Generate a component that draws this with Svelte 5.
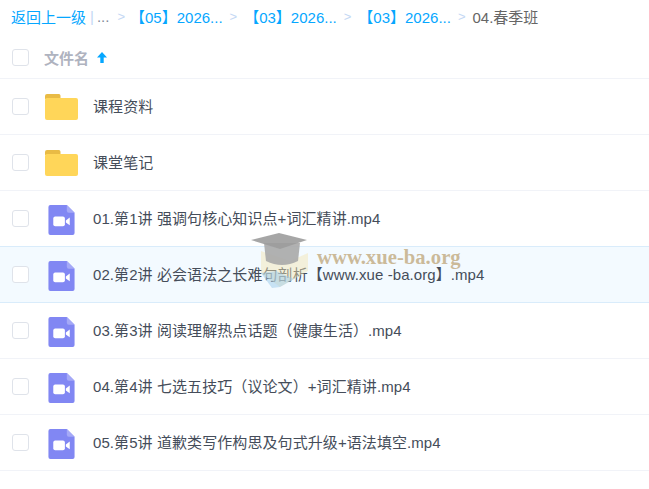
<script>
  const crumbs = ['【05】2026...', '【03】2026...', '【03】2026...'];
  const rows = [
    { name: '课程资料', type: 'folder' },
    { name: '课堂笔记', type: 'folder' },
    { name: '01.第1讲 强调句核心知识点+词汇精讲.mp4', type: 'video' },
    { name: '02.第2讲 必会语法之长难句剖析【www.xue -ba.org】.mp4', type: 'video', active: true },
    { name: '03.第3讲 阅读理解热点话题（健康生活）.mp4', type: 'video' },
    { name: '04.第4讲 七选五技巧（议论文）+词汇精讲.mp4', type: 'video' },
    { name: '05.第5讲 道歉类写作构思及句式升级+语法填空.mp4', type: 'video' }
  ];
</script>

<div class="page">
  <nav class="crumbs">
    <span class="link">返回上一级</span>
    <span class="bar">|</span>
    <span class="dots">...</span>
    {#each crumbs as c, i}
      <span class="sep" class:first={i === 0}>&gt;</span>
      <span class="link">{c}</span>
    {/each}
    <span class="sep last">&gt;</span>
    <span class="current">04.春季班</span>
  </nav>

  <div class="head">
    <span class="check"></span>
    <span class="title">文件名</span>
    <svg class="arrow" width="10" height="11" viewBox="0 0 10 11"><path d="M5 0 L10 5.5 H6.7 V11 H3.3 V5.5 H0 Z" fill="#06a7ff"/></svg>
  </div>

  {#each rows as r}
    <div class="row" class:active={r.active}>
      <span class="check"></span>
      <span class="icon">
        {#if r.type === 'folder'}
          <svg width="33" height="26" viewBox="0 0 33 26">
            <path d="M0 5 V2 A2 2 0 0 1 2 0 H13 A2 2 0 0 1 15.5 2 V5 Z" fill="#e9bb45"/>
            <rect x="0" y="4" width="33" height="22" rx="2" fill="#ffd659"/>
          </svg>
        {:else}
          <svg class="video" width="27" height="30" viewBox="0 0 27 31">
            <path d="M2 0 H19 L27 8 V29 A2 2 0 0 1 25 31 H2 A2 2 0 0 1 0 29 V2 A2 2 0 0 1 2 0 Z" fill="#8187f3"/>
            <path d="M19 0 L27 8 H21 A2 2 0 0 1 19 6 Z" fill="#a5a9f7"/>
            <rect x="5" y="12" width="12" height="10" rx="2" fill="#fff"/>
            <path d="M18 16 L22 13 V21 L18 18 Z" fill="#fff"/>
          </svg>
        {/if}
      </span>
      <span class="name">{r.name}</span>
    </div>
  {/each}

  <div class="mark">
    <svg width="62" height="66" viewBox="0 0 62 66">
      <path d="M11 20 L40 30 L58 22 V40 L30 56 L11 42 Z" fill="#f5e4b0" opacity="0.45"/>
      <path d="M11 42 L22 57 L30 56 L44 48 L26 40 Z" fill="#9cc9ea" opacity="0.5"/>
      <path d="M14 12 H50 L48 30 Q32 38 16 30 Z" fill="#a9a9a9" opacity="0.9"/>
      <path d="M1 9 L29 2 L57 9 L30 18 Z" fill="#9c9c9c" opacity="0.9"/>
    </svg>
    <span class="site">www.xue-ba.org</span>
  </div>
</div>

<style>
  :global(body) {
    margin: 0;
    background: #fff;
  }
  .page {
    position: relative;
    width: 649px;
    height: 489px;
    overflow: hidden;
    font-family: "Liberation Sans", "Noto Sans CJK SC", sans-serif;
    font-size: 15px;
    color: #454d5a;
  }
  .crumbs {
    height: 36px;
    box-sizing: border-box;
    padding: 0 0 3px 11px;
    display: flex;
    align-items: center;
    white-space: nowrap;
  }
  .link {
    color: #06a7ff;
  }
  .bar {
    color: #c4d8f4;
    margin-left: 4px;
  }
  .dots {
    color: #818999;
    margin-left: 3px;
  }
  .sep {
    color: #c4d8f4;
    margin: 0 7px 0 7px;
    font-size: 13px;
  }
  .sep.first {
    margin: 0 5px 0 8px;
  }
  .sep.last {
    margin: 0 7px 0 7px;
  }
  .current {
    color: #666;
  }
  .head {
    height: 43px;
    box-sizing: border-box;
    display: flex;
    align-items: center;
    border-bottom: 1px solid #f1f3f8;
    padding-left: 12px;
  }
  .title {
    margin-left: 15px;
    font-weight: 700;
    color: #afb3bf;
  }
  .arrow {
    margin-left: 8px;
  }
  .check {
    width: 15px;
    height: 15px;
    border: 1px solid #dfe3ea;
    border-radius: 3px;
    background: #fff;
    flex: none;
  }
  .row {
    height: 56px;
    box-sizing: border-box;
    display: flex;
    align-items: center;
    border-bottom: 1px solid #f1f3f8;
    padding-left: 12px;
  }
  .row.active {
    background: #f3faff;
    border-bottom-color: #d9ecfb;
    box-shadow: 0 -1px 0 #d9ecfb;
  }
  .icon {
    width: 33px;
    margin-left: 16px;
    display: flex;
    justify-content: center;
  }
  .video {
    margin-top: 2px;
  }
  .name {
    margin-left: 15px;
    white-space: nowrap;
    letter-spacing: 0.08px;
    margin-bottom: 2px;
  }
  .mark {
    position: absolute;
    left: 250px;
    top: 231px;
    display: flex;
    pointer-events: none;
  }
  .site {
    font-family: "Liberation Serif", serif;
    font-weight: 700;
    font-size: 20.7px;
    color: rgba(190, 165, 120, 0.75);
    margin: 15px 0 0 5px;
  }
</style>
